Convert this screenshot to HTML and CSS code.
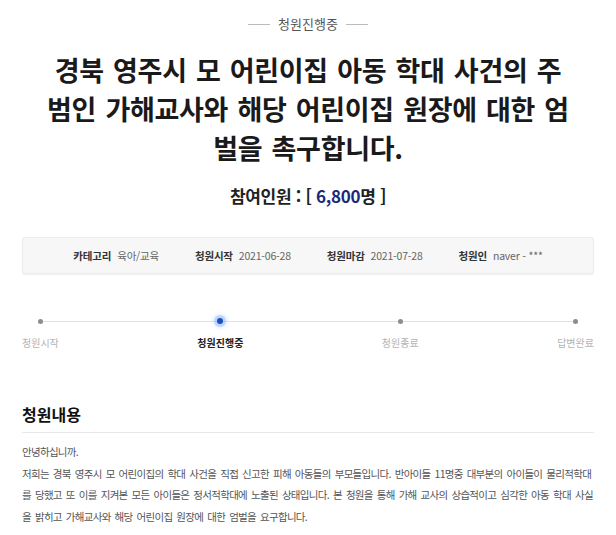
FILE: index.html
```html
<!DOCTYPE html>
<html lang="ko">
<head>
    <meta charset="UTF-8">
    <meta name="viewport" content="width=device-width, initial-scale=1.0">
    <title>청원진행중</title>
    <link rel="stylesheet" href="styles.css">
</head>
<body>
    <div class="petition">
        <p class="status"><span>청원진행중</span></p>
        <h1 class="title">경북 영주시 모 어린이집 아동 학대 사건의 주범인 가해교사와 해당 어린이집 원장에 대한 엄벌을 촉구합니다.</h1>
        <p class="count">참여인원 : [ <span class="num">6,800</span>명 ]</p>

        <ul class="info">
            <li><b>카테고리</b><span>육아/교육</span></li>
            <li><b>청원시작</b><span>2021-06-28</span></li>
            <li><b>청원마감</b><span>2021-07-28</span></li>
            <li><b>청원인</b><span>naver - ***</span></li>
        </ul>

        <div class="steps">
            <div class="step"><i class="dot"></i><span>청원시작</span></div>
            <div class="step on"><i class="dot"></i><span>청원진행중</span></div>
            <div class="step"><i class="dot"></i><span>청원종료</span></div>
            <div class="step"><i class="dot"></i><span>답변완료</span></div>
        </div>

        <div class="content">
            <h3>청원내용</h3>
            <div class="text">안녕하십니까.<br>저희는 경북 영주시 모 어린이집의 학대 사건을 직접 신고한 피해 아동들의 부모들입니다. 반아이들 11명중 대부분의 아이들이 물리적학대를 당했고 또 이를 지켜본 모든 아이들은 정서적학대에 노출된 상태입니다. 본 청원을 통해 가해 교사의 상습적이고 심각한 아동 학대 사실을 밝히고 가해교사와 해당 어린이집 원장에 대한 엄벌을 요구합니다.</div>
        </div>
    </div>
</body>
</html>
```

FILE: styles.css
```css
body {
    margin: 0;
    background: #fff;
    font-family: "Noto Sans CJK KR", "Noto Sans", sans-serif;
    color: #333;
}
.petition {
    padding: 15px 22px 0;
}
.status {
    margin: 0;
    display: flex;
    justify-content: center;
    align-items: center;
    gap: 8px;
    font-size: 13px;
    line-height: 18px;
    color: #555;
}
.status::before,
.status::after {
    content: "";
    width: 22px;
    height: 1px;
    background: #bbb;
}
.title {
    width: 526px;
    margin: 17px auto 0;
    text-align: center;
    font-size: 27px;
    line-height: 39px;
    letter-spacing: -0.3px;
    word-spacing: 2px;
    font-weight: 700;
    color: #1a1a1a;
}
.count {
    margin: 17px 0 0;
    text-align: center;
    font-size: 17px;
    line-height: 24px;
    font-weight: 700;
    color: #222;
    letter-spacing: -0.3px;
}
.count .num {
    color: #1b2a78;
}
.info {
    list-style: none;
    margin: 29px 0 0;
    padding: 0;
    height: 35px;
    display: flex;
    justify-content: center;
    align-items: center;
    gap: 36px;
    background: #f7f7f7;
    border: 1px solid #ececec;
    border-radius: 3px;
    box-shadow: 0 1px 2px rgba(0, 0, 0, 0.06);
    font-size: 10.5px;
    letter-spacing: -0.2px;
}
.info li {
    display: flex;
    align-items: center;
    gap: 6px;
}
.info b {
    color: #333;
}
.info span {
    color: #666;
}
.steps {
    position: relative;
    margin-top: 40px;
    display: flex;
    justify-content: space-between;
}
.steps::before {
    content: "";
    position: absolute;
    left: 19px;
    right: 19px;
    top: 7px;
    height: 1px;
    background: #e2e2e2;
}
.step {
    position: relative;
    display: flex;
    flex-direction: column;
    align-items: center;
    gap: 8px;
    font-size: 10px;
    line-height: 14px;
    color: #b3b3b3;
}
.step .dot {
    width: 14px;
    height: 14px;
    display: flex;
    align-items: center;
    justify-content: center;
}
.step .dot::after {
    content: "";
    width: 5px;
    height: 5px;
    border-radius: 50%;
    background: #8c8c8c;
}
.step.on {
    color: #222;
    font-weight: 700;
}
.step.on .dot::after {
    width: 6px;
    height: 6px;
    background: #1b4fbe;
    box-shadow: 0 0 0 3px rgba(120, 165, 245, 0.35), 0 0 4px 4px rgba(150, 190, 255, 0.3);
}
.content {
    margin-top: 53px;
}
.content h3 {
    margin: 0;
    padding-bottom: 7px;
    border-bottom: 1px solid #e8e8e8;
    font-size: 16px;
    line-height: 22px;
    color: #111;
}
.content .text {
    padding-top: 8px;
    font-size: 10.5px;
    line-height: 21.5px;
    letter-spacing: -0.7px;
    word-spacing: 1.75px;
    color: #555;
}
```
